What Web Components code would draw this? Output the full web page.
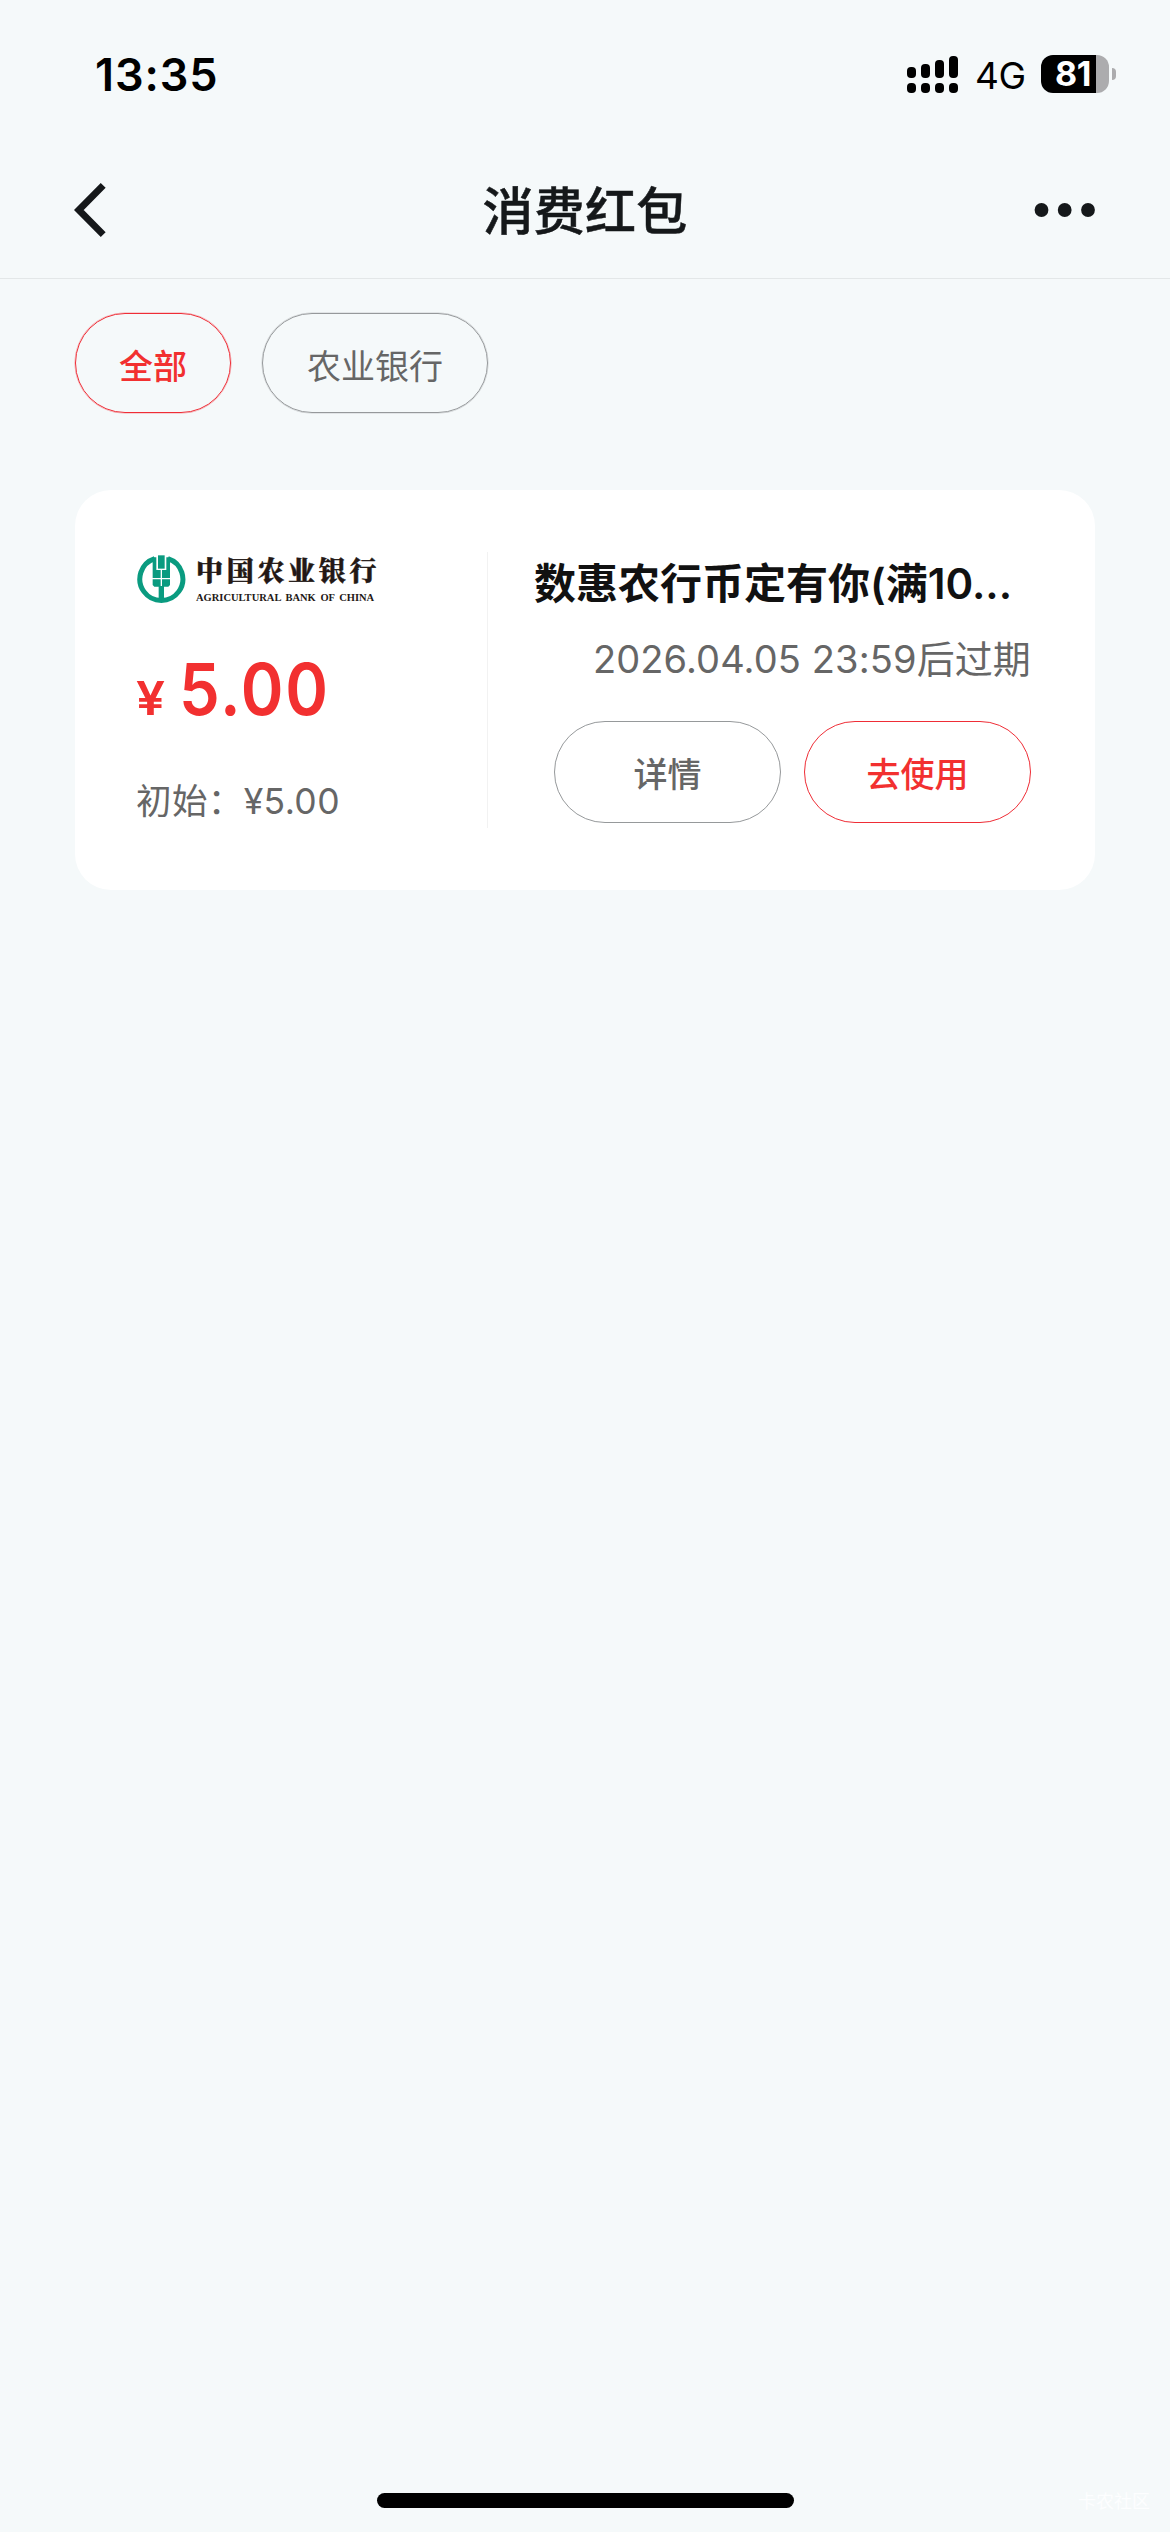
<!DOCTYPE html>
<html lang="zh-CN">
<head>
<meta charset="utf-8">
<title>消费红包</title>
<style>
html,body{margin:0;padding:0}
body{background:#f5f9fa;font-family:Inter,"Noto Sans CJK SC",sans-serif;width:1170px;height:2532px;overflow:hidden}
</style>
</head>
<body>
<coupon-app></coupon-app>
<script>
const define = (name, html) => {
  const t = document.createElement('template');
  t.innerHTML = html;
  customElements.define(name, class extends HTMLElement {
    constructor() {
      super();
      this.attachShadow({mode: 'open'}).appendChild(t.content.cloneNode(true));
    }
  });
};

define('status-bar', `
<style>
:host{display:flex;height:150px;box-sizing:border-box;padding:0 54px 0 95px;color:#000;align-items:flex-start}
.time{font-size:45px;font-weight:600;line-height:54px;margin-top:48px;letter-spacing:.9px;flex:1}
.sig{margin-top:55px;display:block}
.net{font-size:37px;line-height:44px;margin:54px 0 0 16px;width:66px;letter-spacing:-.5px}
.bat{display:flex;align-items:center;margin-top:55px}
.cell{width:68px;height:38px;border-radius:12px;background:linear-gradient(90deg,#000 55px,#acacae 55px);color:#fff;font-size:34px;font-weight:700;line-height:38px;text-indent:14px;letter-spacing:-.5px}
.nub{width:4px;height:12px;margin-left:3px;background:#acacae;border-radius:0 6px 6px 0}
</style>
<span class="time">13:35</span>
<svg class="sig" width="52" height="39" viewBox="907 55 52 39">
<rect x="907" y="67" width="9" height="11" rx="4"/><rect x="921" y="64" width="9" height="14" rx="4"/><rect x="935" y="60" width="9" height="18" rx="4"/><rect x="949" y="56" width="9" height="22" rx="4"/>
<rect x="907" y="83" width="9" height="10" rx="4"/><rect x="921" y="83" width="9" height="10" rx="4"/><rect x="935" y="83" width="9" height="10" rx="4"/><rect x="949" y="83" width="9" height="10" rx="4"/>
</svg>
<span class="net">4G</span>
<div class="bat"><div class="cell">81</div><div class="nub"></div></div>
`);

define('nav-bar', `
<style>
:host{display:flex;height:129px;box-sizing:border-box;border-bottom:1px solid #e3e7e8;padding:0 74px;align-items:flex-start;justify-content:space-between;color:#15181a}
svg{display:block;width:62px;height:120px}
.t{font-size:51px;line-height:76px;margin-top:24px;font-weight:500;letter-spacing:.3px;-webkit-text-stroke:.5px #15181a}
</style>
<svg viewBox="74 150 62 120"><path d="M103.2 185.3 78.8 210l24.4 24.6" fill="none" stroke="#15181a" stroke-width="6.9"/></svg>
<span class="t"><slot></slot></span>
<svg viewBox="1034 150 62 120" fill="#15181a"><circle cx="1041.5" cy="210" r="6.9"/><circle cx="1064.7" cy="210" r="6.9"/><circle cx="1088" cy="210" r="6.9"/></svg>
`);

define('pill-button', `
<style>
:host{display:flex;box-sizing:border-box;justify-content:center;border:1px solid #96999b;border-radius:51px;color:#666;font-size:34px;height:100px;line-height:50px;padding-top:28px}
:host([tone=red]){border-color:#ef2d36;color:#f23030}
:host([chip]){box-shadow:0 0 0 .5px #96999b66}
:host([chip][tone=red]){box-shadow:0 0 0 .5px #ef2d3666}
:host([tone=red]),:host([medium]){font-weight:500}
</style><slot></slot>`);

define('bank-logo', `
<style>
:host{display:flex;height:50px;align-items:flex-start;gap:10px}
svg{display:block;flex:none}
.w{display:flex;flex-direction:column;color:#231815;white-space:nowrap}
.cn{font-family:"Noto Serif CJK SC","Noto Sans CJK SC",serif;font-weight:900;font-size:27px;line-height:30px;letter-spacing:3.7px;margin-top:1px;-webkit-text-stroke:.4px #231815}
.en{font-family:"Liberation Serif",serif;font-weight:700;font-size:10.5px;line-height:12px;margin-top:7px;word-spacing:2px}
</style>
<svg width="50" height="50" viewBox="18 12 150 150">
<path d="M74 25.7A64.5 64.5 0 1 0 114 25.7" fill="none" stroke="#0a9b80" stroke-width="15"/>
<g fill="#0a9b80"><path d="M68 22H79V60H92V84H68Z"/><path d="M120 22H109V60H96V84H120Z"/><path d="M84 16H104V56H84Z"/><path d="M68 88H92V108H96V88H120V105L115 110H102V152H86V110H73L68 105Z"/></g>
</svg>
<div class="w"><span class="cn">中国农业银行</span><span class="en">AGRICULTURAL BANK OF CHINA</span></div>
`);

define('coupon-card', `
<style>
:host{display:flex;box-sizing:border-box;width:1020px;height:400px;margin:77px 0 0 75px;background:#fff;border-radius:36px;padding:62px 64px 0 61px}
.l{width:351px;height:276px;border-right:1px solid #f2f2f2;display:flex;flex-direction:column}
.logo{margin-top:2px}
.price{display:flex;align-items:baseline;color:#f23030;margin-top:45px;line-height:80px;font-weight:600;font-size:72px}
.price .y{font-size:46px;width:43px;transform:scaleX(1.12);transform-origin:0 50%}
.price .n{letter-spacing:2px;transform:scaleX(.9);transform-origin:0 50%}
.init{font-size:35.5px;line-height:50px;color:#666;margin-top:39px;white-space:nowrap;letter-spacing:.4px}
.r{flex:1;display:flex;flex-direction:column;min-width:0}
.title{font-size:42px;line-height:60px;font-weight:600;color:#111;margin:2px 0 0 46px;white-space:nowrap}
.date{font-size:38px;line-height:54px;color:#666;text-align:right;margin-top:18px;white-space:nowrap;letter-spacing:.12px}
.b{display:flex;gap:23px;margin-top:35px;justify-content:flex-end}
.b pill-button{width:227px;height:102px}
</style>
<div class="l"><bank-logo class="logo"></bank-logo>
<div class="price"><span class="y">¥</span><span class="n"><slot name="amount"></slot></span></div>
<div class="init"><slot name="initial"></slot></div></div>
<div class="r"><div class="title"><slot name="title"></slot></div>
<div class="date"><slot name="date"></slot></div>
<div class="b"><pill-button medium>详情</pill-button><pill-button tone="red">去使用</pill-button></div></div>
`);

define('coupon-app', `
<style>
:host{display:flex;flex-direction:column;width:1170px;height:2532px;position:relative}
.chips{display:flex;gap:31px;margin:34px 0 0 75px}
.a{width:156px}.n{width:226px}
.home{width:417px;height:15px;border-radius:8px;background:#000;margin:auto 0 24px 377px}
.mark{position:absolute;left:1078px;top:2489px;font-size:18px;line-height:26px;color:#fdfeff}
</style>
<status-bar></status-bar>
<nav-bar>消费红包</nav-bar>
<div class="chips"><pill-button class="a" chip tone="red">全部</pill-button><pill-button class="n" chip>农业银行</pill-button></div>
<coupon-card><span slot="amount">5.00</span><span slot="initial">初始：¥5.00</span><span slot="title">数惠农行币定有你(满10...</span><span slot="date">2026.04.05 23:59后过期</span></coupon-card>
<div class="home"></div>
<span class="mark">卡农社区</span>
`);
</script>
</body>
</html>
